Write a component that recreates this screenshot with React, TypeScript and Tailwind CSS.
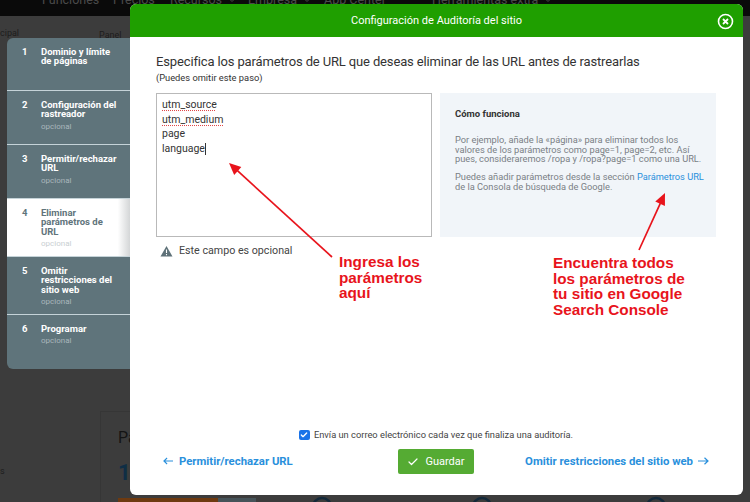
import React from "react";
import { Check, ChevronDown } from "lucide-react";

const font = "font-['Roboto',sans-serif]";

const steps = [
  { n: "1", t: ["Dominio y límite", "de páginas"], o: false, h: "h-[53px]" },
  { n: "2", t: ["Configuración del", "rastreador"], o: true, h: "h-[54px]" },
  { n: "3", t: ["Permitir/rechazar", "URL"], o: true, h: "h-[54px]" },
  { n: "4", t: ["Eliminar", "parámetros de", "URL"], o: true, h: "h-[58px]", active: true },
  { n: "5", t: ["Omitir", "restricciones del", "sitio web"], o: true, h: "h-[58px]" },
  { n: "6", t: ["Programar"], o: true, h: "h-[54px]" },
];

function Arrow({ x1, y1, x2, y2 }: { x1: number; y1: number; x2: number; y2: number }) {
  const a = Math.atan2(y2 - y1, x2 - x1);
  const L = 13;
  const W = 0.42;
  const p1 = `${x2 - L * Math.cos(a - W)},${y2 - L * Math.sin(a - W)}`;
  const p2 = `${x2 - L * Math.cos(a + W)},${y2 - L * Math.sin(a + W)}`;
  const mx = x2 - L * 0.85 * Math.cos(a);
  const my = y2 - L * 0.85 * Math.sin(a);
  return (
    <>
      <line x1={x1} y1={y1} x2={mx} y2={my} stroke="#e8141c" strokeWidth="1.7" />
      <polygon points={`${x2},${y2} ${p1} ${p2}`} fill="#e8141c" />
    </>
  );
}

export default function App() {
  return (
    <div className={`relative w-[750px] h-[502px] overflow-hidden bg-[#3c3c3c] ${font}`}>
      {/* dimmed page behind the modal */}
      <div className="h-[16px] bg-[#0a0a0a] relative overflow-hidden text-[12.5px] leading-[14px] text-[#4a4a4a]">
        <span className="absolute left-[42px] top-[-7px]">Funciones</span>
        <span className="absolute left-[113px] top-[-7px]">Precios</span>
        <span className="absolute left-[170px] top-[-7px] flex items-center gap-[4px]">Recursos<ChevronDown size={12} /></span>
        <span className="absolute left-[248px] top-[-7px] flex items-center gap-[4px]">Empresa<ChevronDown size={12} /></span>
        <span className="absolute left-[324px] top-[-7px]">App Center</span>
        <span className="absolute left-[432px] top-[-7px] flex items-center gap-[4px]">Herramientas extra<ChevronDown size={12} /></span>
      </div>
      <div className="absolute left-[0px] top-[27px] text-[9px] text-[#1c1c1c]">cipal</div>
      <div className="absolute left-[99px] top-[29px] text-[9px] text-[#1c1c1c]">Panel</div>
      <div className="absolute left-[0px] top-[465px] text-[9px] text-[#1c1c1c]">s</div>
      <div className="absolute left-[100px] top-[411px] w-[30px] h-[91px] border-t border-l border-[#363636]" />
      <div className="absolute left-[118px] top-[426px] text-[16px] text-[#141414]">Pa</div>
      <div className="absolute left-[118px] top-[456px] text-[22px] font-bold text-[#0f2e45]">1</div>
      <div className="absolute left-[118px] top-[498px] w-[100px] h-[4px] bg-[#6e3a10]" />
      <div className="absolute left-[218px] top-[498px] w-[38px] h-[4px] bg-[#465359]" />
      <svg className="absolute left-0 top-[495px]" width="750" height="7" fill="none">
        <circle cx="322" cy="12" r="9" stroke="#14293a" strokeWidth="2.5" />
        <circle cx="482" cy="12" r="9" stroke="#14293a" strokeWidth="2.5" />
        <circle cx="656" cy="12" r="9" stroke="#14293a" strokeWidth="2.5" />
      </svg>

      {/* steps panel */}
      <div className="absolute left-[7px] top-[38px] w-[123px] h-[331px] rounded-l-[6px] overflow-hidden bg-[#5f747b] flex flex-col">
        {steps.map((s) => (
          <div
            key={s.n}
            className={`${s.h} shrink-0 flex pl-[15px] pt-[9px] border-b border-[#c5d3d8] last:border-b-0 ${
              s.active ? "bg-gradient-to-r from-white from-[90%] to-[#d4d6d7] text-[#5f747b]" : "text-white"
            }`}
          >
            <div className="w-[19px] text-[9.5px] leading-[9.4px] font-bold">{s.n}</div>
            <div className="flex flex-col">
              {s.t.map((l) => (
                <div key={l} className="text-[9.5px] leading-[9.3px] font-bold whitespace-nowrap">{l}</div>
              ))}
              {s.o && (
                <div className={`text-[8px] leading-[9px] mt-[3px] ${s.active ? "text-[#c9cfd2]" : "text-[#a9b6bb]"}`}>opcional</div>
              )}
            </div>
          </div>
        ))}
      </div>

      {/* modal */}
      <div className="absolute left-[130px] top-[4px] w-[613px] h-[491px] rounded-[6px] overflow-hidden bg-white flex flex-col">
        <div className="relative h-[33px] shrink-0 pt-[2px] bg-[#1f9f00] flex items-center justify-center text-white text-[11px]">
          Configuración de Auditoría del sitio
          <svg className="absolute right-[9px] top-[9px]" width="17" height="17" viewBox="0 0 17 17" fill="none">
            <circle cx="8.5" cy="8.5" r="7" stroke="white" strokeWidth="1.6" />
            <path d="M6 6l5 5M11 6l-5 5" stroke="white" strokeWidth="1.8" />
          </svg>
        </div>
        <div className="flex-1 flex flex-col pl-[26px] pr-[27px]">
          <div className="mt-[15px] text-[13px] tracking-[-0.14px] leading-[20px] text-[#333] whitespace-nowrap">
            Especifica los parámetros de URL que deseas eliminar de las URL antes de rastrearlas
          </div>
          <div className="text-[9.3px] leading-[12px] text-[#333]">(Puedes omitir este paso)</div>
          <div className="mt-[9px] flex gap-[8px]">
            <div className="w-[276px] h-[144px] border border-[#b9b9b9] px-[5px] pt-[4px] text-[10.5px] leading-[14.6px] text-[#333]">
              <div><span className="underline decoration-dotted decoration-[#e04848] underline-offset-[2px]">utm_source</span></div>
              <div><span className="underline decoration-dotted decoration-[#e04848] underline-offset-[2px]">utm_medium</span></div>
              <div>page</div>
              <div className="flex items-center">language<span className="w-px h-[12px] bg-[#333]" /></div>
            </div>
            <div className="w-[276px] h-[144px] bg-[#f1f5f9] pl-[15px] pr-[8px] pt-[15px] text-[9.25px] leading-[9.7px] text-[#7a7f85]">
              <div className="text-[9.5px] leading-[12px] font-bold text-[#333]">Cómo funciona</div>
              <div className="mt-[15px]">
                <div className="whitespace-nowrap">Por ejemplo, añade la «página» para eliminar todos los</div>
                <div className="whitespace-nowrap">valores de los parámetros como page=1, page=2, etc. Así</div>
                <div className="whitespace-nowrap">pues, consideraremos /ropa y /ropa?page=1 como una URL.</div>
              </div>
              <div className="mt-[8px]">
                <div className="whitespace-nowrap">Puedes añadir parámetros desde la sección <span className="text-[#2a90dc]">Parámetros URL</span></div>
                <div className="whitespace-nowrap">de la Consola de búsqueda de Google.</div>
              </div>
            </div>
          </div>
          <div className="mt-[7px] flex items-center gap-[6px] pl-[4px] text-[10.7px] leading-[14px] text-[#444]">
            <svg width="13" height="12" viewBox="0 0 13 12">
              <path d="M6.5 1L12.5 11.5H.5z" fill="#5e7178" />
              <path d="M6.5 4.5v3.5M6.5 9v1.2" stroke="white" strokeWidth="1.1" />
            </svg>
            Este campo es opcional
          </div>
          <div className="flex-1" />
          <div className="flex items-center justify-center gap-[4px] text-[9.3px] leading-[14px] text-[#444]">
            <span className="w-[11px] h-[10px] rounded-[2px] bg-[#1a73e8] flex items-center justify-center">
              <Check size={8} color="white" strokeWidth={4} />
            </span>
            Envía un correo electrónico cada vez que finaliza una auditoría.
          </div>
          <div className="mt-[7px] mb-[21px] h-[25px] relative flex items-center justify-between text-[11.35px] font-bold text-[#2a90dc]">
            <div className="flex items-center gap-[6px] ml-[7px]">
              <svg width="10" height="8" viewBox="0 0 11 8" fill="none"><path d="M11 4H1M4.5 .7L1 4l3.5 3.3" stroke="#2a90dc" strokeWidth="1.2" /></svg>
              Permitir/rechazar URL
            </div>
            <div className="absolute left-[242px] top-0 w-[76px] h-[25px] pt-[1px] rounded-[2px] bg-[#55ab33] flex items-center justify-center gap-[6px] text-[11px] font-normal text-white">
              <Check size={12} strokeWidth={2.4} />
              Guardar
            </div>
            <div className="flex items-center gap-[5px] mr-[7px]">
              Omitir restricciones del sitio web
              <svg width="11" height="8" viewBox="0 0 11 8" fill="none"><path d="M0 4h10M6.5 .7L10 4 6.5 7.3" stroke="#2a90dc" strokeWidth="1.2" /></svg>
            </div>
          </div>
        </div>
      </div>

      {/* annotations */}
      <svg className="absolute left-0 top-0 pointer-events-none" width="750" height="502">
        <Arrow x1={332} y1={257} x2={229} y2={163} />
        <Arrow x1={639} y1={250} x2={665} y2={193} />
      </svg>
      <div className="absolute left-[339px] top-[254px] font-['Liberation_Sans',sans-serif] font-bold text-[15.3px] leading-[15.5px] text-[#e8141c]">
        Ingresa los<br />parámetros<br />aquí
      </div>
      <div className="absolute left-[553px] top-[255px] font-['Liberation_Sans',sans-serif] font-bold text-[15.3px] leading-[15.5px] text-[#e8141c] whitespace-nowrap">
        Encuentra todos<br />los parámetros de<br />tu sitio en Google<br />Search Console
      </div>
    </div>
  );
}
